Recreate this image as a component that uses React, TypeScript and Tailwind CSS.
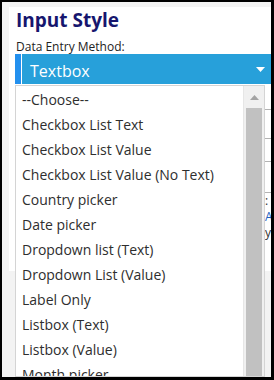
const options = [
  '--Choose--',
  'Checkbox List Text',
  'Checkbox List Value',
  'Checkbox List Value (No Text)',
  'Country picker',
  'Date picker',
  'Dropdown list (Text)',
  'Dropdown List (Value)',
  'Label Only',
  'Listbox (Text)',
  'Listbox (Value)',
  'Month picker',
];

export default function App() {
  return (
    <div className="relative h-[380px] w-[274px] overflow-hidden border-t-2 border-l-2 border-r-[3px] border-b-[3px] border-black bg-[#f3f3f3] font-['Open_Sans',sans-serif]">
      {/* card behind the open list */}
      <div className="ml-[7px] h-[264px] bg-white pl-[6px]">
        <h1 className="mt-[5px] h-[26px] pl-[1px] text-[19px] font-bold leading-[26px] text-[#16166e]">Input Style</h1>
        <div className="mt-[7px] h-[14px] pl-[1px] text-[12px] leading-[14px] text-[#222]">Data Entry Method:</div>

        {/* select */}
        <div className="flex h-[30px] items-center bg-[#27a0da]">
          <div className="h-full w-[6px] bg-[#2390ee]" />
          <div className="h-full w-[1px] bg-white" />
          <div className="flex-1 pl-[8px] pt-[3px] text-[16px] leading-[22px] text-white">Textbox</div>
          <svg width="9" height="5" viewBox="0 0 9 5" className="mr-[6px]">
            <path d="M0 0H9L4.5 5Z" fill="white" />
          </svg>
        </div>

        {/* table rows hidden under the list */}
        <div className="h-[26px] border-b border-[#b3b3b3]" />
        <div className="h-[29px] border-b border-[#b3b3b3]" />
        <div className="h-[23px] border-b border-[#b3b3b3]" />
        <div className="h-[31px] border-b border-[#b3b3b3]" />
        <div className="flex justify-end text-[12px] leading-[16px]">
          <div className="w-[6px]">
            <div className="text-[#333]">:</div>
            <div className="text-[#1c5fc0]">A</div>
            <div className="text-[#333]">y</div>
          </div>
        </div>
      </div>

      {/* open options list */}
      <div className="absolute bottom-0 left-[13px] top-[83px] flex w-[250px] border border-[#d4d4d4] bg-white">
        <ul className="flex-1 overflow-hidden pt-[1px]">
          {options.map((o) => (
            <li key={o} className="h-[25px] whitespace-nowrap pl-[6px] text-[14px] leading-[25px] text-[#2e2e2e]">
              {o}
            </li>
          ))}
        </ul>
        <div className="flex w-[21px] flex-col border-l border-[#e6e6e6] bg-[#f0f0f0]">
          <div className="flex h-[22px] items-center justify-center">
            <svg width="9" height="5" viewBox="0 0 9 5">
              <path d="M4.5 0L9 5H0Z" fill="#a3a3a3" />
            </svg>
          </div>
          <div className="mx-[2px] flex-1 bg-[#c1c1c1]" />
        </div>
      </div>
    </div>
  );
}
